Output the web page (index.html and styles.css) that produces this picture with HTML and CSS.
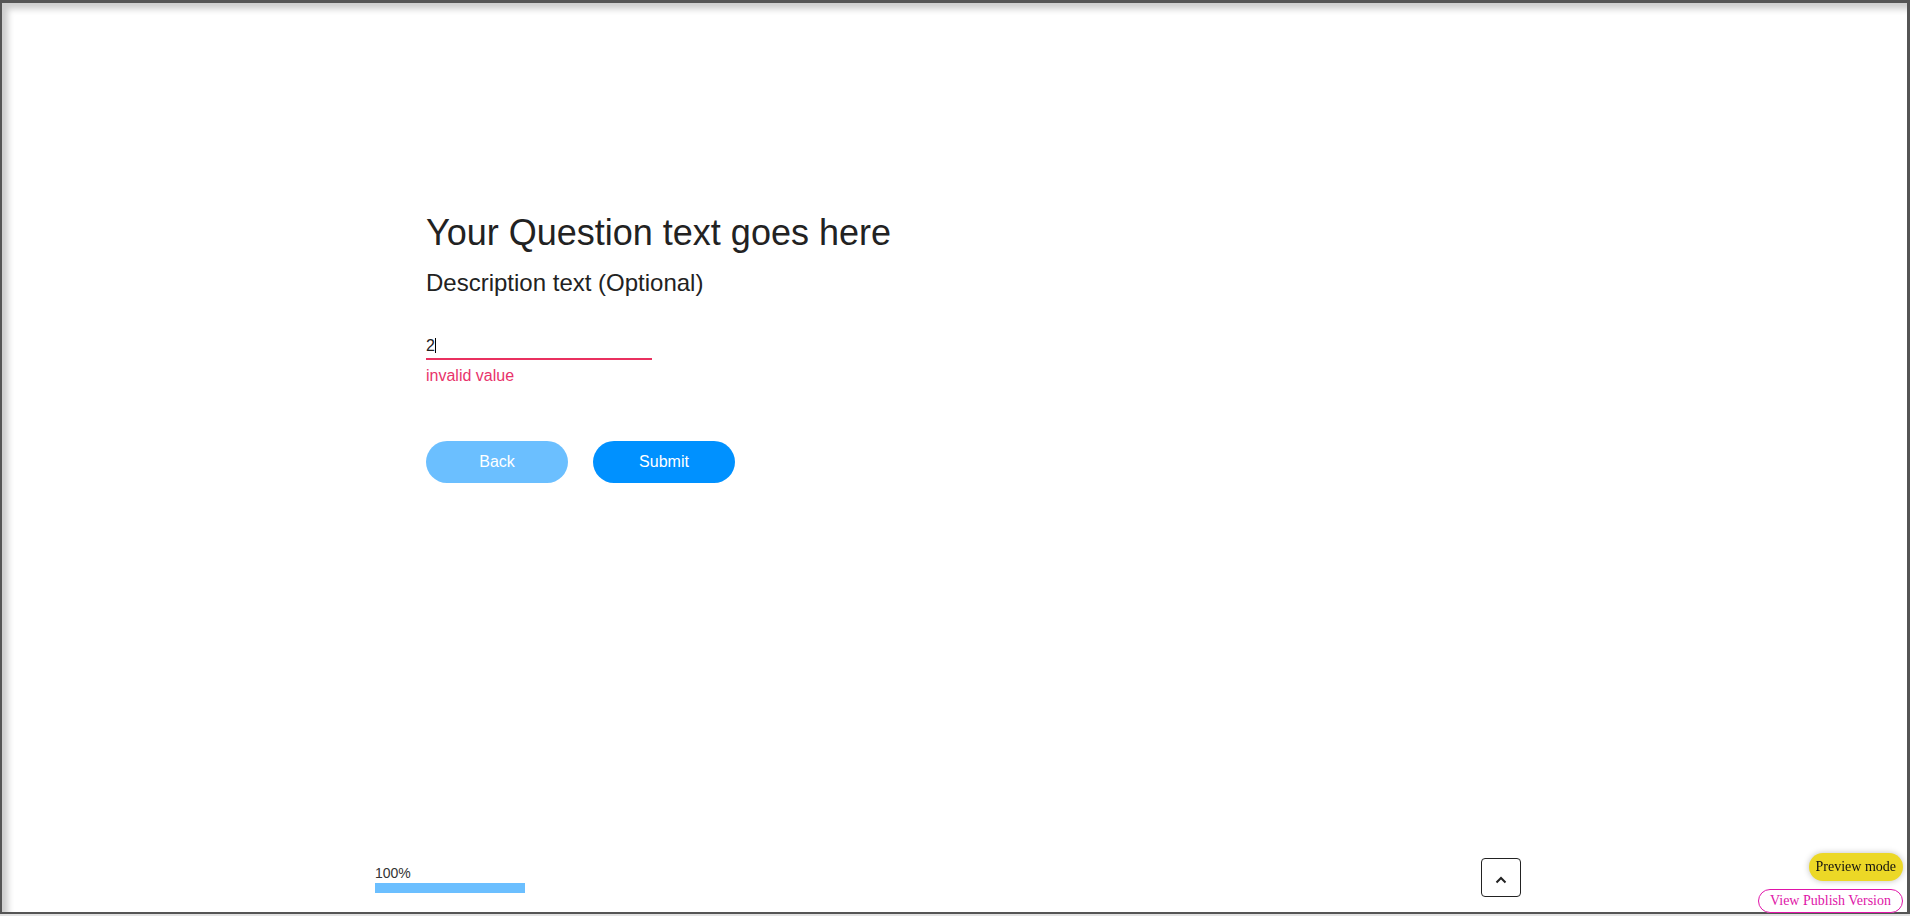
FILE: index.html
```html
<!DOCTYPE html>
<html lang="en">
<head>
    <meta charset="UTF-8">
    <meta name="viewport" content="width=device-width, initial-scale=1.0">
    <title>Question Preview</title>
    <link rel="stylesheet" href="styles.css">
</head>
<body>
    <div class="frame">
        <div class="content">
            <h1 class="question">Your Question text goes here</h1>
            <p class="description">Description text (Optional)</p>

            <div class="field invalid">
                <span class="field-value">2</span><span class="caret"></span>
            </div>
            <div class="error-text">invalid value</div>

            <div class="actions">
                <button class="btn btn-back">Back</button>
                <button class="btn btn-submit">Submit</button>
            </div>
        </div>

        <div class="footer">
            <div class="progress">
                <div class="progress-label">100%</div>
                <div class="progress-bar"></div>
            </div>
            <button class="scroll-up" aria-label="Scroll up">
                <svg width="12" height="8" viewBox="0 0 12 8">
                    <polyline points="1.5,6.5 6,2 10.5,6.5" fill="none" stroke="#222" stroke-width="2"/>
                </svg>
            </button>
        </div>
    </div>

    <div class="preview-badge">Preview mode</div>
    <a class="publish-link" href="#">View Publish Version</a>
</body>
</html>
```

FILE: styles.css
```css
html, body {
    margin: 0;
    height: 916px;
    overflow: hidden;
}

body {
    background-color: #e2e2e2;
    font-family: "Liberation Sans", Arial, sans-serif;
}

.frame {
    box-sizing: border-box;
    height: 914px;
    display: flex;
    flex-direction: column;
    background-color: #fff;
    border-style: solid;
    border-color: #555;
    border-width: 3px 3px 2px 2px;
    box-shadow: inset 6px 6px 6px rgba(0, 0, 0, 0.2);
}

.content {
    padding: 208px 0 0 424px;
}

.question {
    margin: 0;
    font-size: 36px;
    line-height: 44px;
    font-weight: normal;
    color: #222;
}

.description {
    margin: 13px 0 0;
    font-size: 24px;
    line-height: 30px;
    color: #222;
}

.field {
    box-sizing: border-box;
    width: 226px;
    margin-top: 36px;
    font-size: 16px;
    line-height: 24px;
    color: #212121;
    border-bottom: 2px solid #e9305f;
}

.caret {
    display: inline-block;
    width: 1px;
    height: 15px;
    background-color: #000;
    vertical-align: -2px;
}

.error-text {
    margin-top: 6px;
    font-size: 16px;
    line-height: 20px;
    color: #e8336b;
}

.actions {
    display: flex;
    gap: 25px;
    margin-top: 55px;
}

.btn {
    width: 142px;
    height: 42px;
    border: none;
    border-radius: 21px;
    color: #fff;
    font-family: "Liberation Sans", Arial, sans-serif;
    font-size: 16px;
    cursor: pointer;
}

.btn-back {
    background-color: #6bbfff;
}

.btn-submit {
    background-color: #0091ff;
}

.footer {
    margin-top: auto;
    display: flex;
    justify-content: space-between;
    align-items: flex-end;
    padding: 0 386px 15px 373px;
}

.progress {
    margin-bottom: 4px;
}

.progress-label {
    font-size: 14px;
    line-height: 16px;
    color: #333;
}

.progress-bar {
    width: 150px;
    height: 10px;
    margin-top: 2px;
    background-color: #6bbfff;
}

.scroll-up {
    width: 40px;
    height: 39px;
    padding: 0;
    display: flex;
    align-items: center;
    justify-content: center;
    background-color: #fff;
    border: 1px solid #222;
    border-radius: 4px;
    cursor: pointer;
}

.scroll-up svg {
    margin-top: 4px;
}

.preview-badge {
    position: fixed;
    right: 7px;
    bottom: 35px;
    height: 28px;
    padding: 0 7px;
    display: flex;
    align-items: center;
    border-radius: 14px;
    background-color: #ecd826;
    box-shadow: 0 0 6px rgba(0, 0, 0, 0.25);
    font-family: "Liberation Serif", "Times New Roman", serif;
    font-size: 14px;
    color: #111;
}

.publish-link {
    position: fixed;
    right: 7px;
    bottom: 3px;
    box-sizing: border-box;
    height: 24px;
    padding: 0 11px;
    display: flex;
    align-items: center;
    border: 1px solid #e014a8;
    border-radius: 12px;
    background-color: #fff;
    font-family: "Liberation Serif", "Times New Roman", serif;
    font-size: 14px;
    color: #e014a8;
    text-decoration: none;
}
```
